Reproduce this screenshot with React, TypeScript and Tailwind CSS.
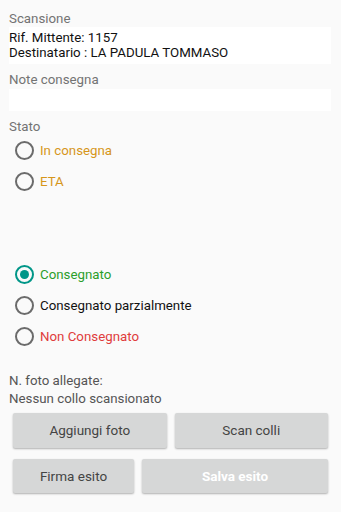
import React from "react";

function Radio({ label, color, checked }: { label: string; color: string; checked?: boolean }) {
  return (
    <div className="flex items-center h-[31px] pl-[15px]">
      {checked ? (
        <div className="w-[19px] h-[19px] rounded-full border-2 border-[#009688] flex items-center justify-center">
          <div className="w-[9px] h-[9px] rounded-full bg-[#009688]" />
        </div>
      ) : (
        <div className="w-[19px] h-[19px] rounded-full border-2 border-[#6b6b6b]" />
      )}
      <span className={`ml-[6px] text-[13.3px] ${color}`}>{label}</span>
    </div>
  );
}

export default function App() {
  return (
    <div className="w-[341px] h-[512px] bg-[#fafafa] overflow-hidden" style={{ fontFamily: "Roboto, 'Liberation Sans', sans-serif" }}>
      <div className="flex flex-col px-[9px] pt-[10px]">
        <div className="text-[13.3px] leading-[17px] text-[#737373]">Scansione</div>
        <div className="bg-white w-[322px] h-[37px] pt-[3px] text-[13.3px] leading-[15px] text-[#111]">
          <div>Rif. Mittente: 1157</div>
          <div>Destinatario : LA PADULA TOMMASO</div>
        </div>
        <div className="mt-[7px] text-[13.3px] leading-[17px] text-[#737373]">Note consegna</div>
        <div className="bg-white w-[322px] h-[22px] mt-[1px]" />
        <div className="mt-[7px] text-[13.3px] leading-[17px] text-[#737373]">Stato</div>
      </div>
      <div className="flex flex-col">
        <Radio label="In consegna" color="text-[#d6961a]" />
        <Radio label="ETA" color="text-[#d6961a]" />
        <div className="h-[62px]" />
        <Radio label="Consegnato" color="text-[#2b9e2b]" checked />
        <Radio label="Consegnato parzialmente" color="text-[#111]" />
        <Radio label="Non Consegnato" color="text-[#e03c3c]" />
      </div>
      <div className="px-[9px] mt-[20px] text-[13.3px] leading-[18px] text-[#555]">
        <div>N. foto allegate:</div>
        <div>Nessun collo scansionato</div>
      </div>
      <div className="flex flex-col gap-[11px] px-[13px] mt-[5px]">
        <div className="flex gap-[8px]">
          <button className="flex-1 h-[35px] bg-[#d6d7d7] rounded-[2px] shadow-[0_1px_2px_rgba(0,0,0,0.3)] text-[13.5px] text-[#444]">Aggiungi foto</button>
          <button className="flex-1 h-[35px] bg-[#d6d7d7] rounded-[2px] shadow-[0_1px_2px_rgba(0,0,0,0.3)] text-[13.5px] text-[#444]">Scan colli</button>
        </div>
        <div className="flex gap-[8px]">
          <button className="w-[121px] h-[34px] bg-[#d6d7d7] rounded-[2px] shadow-[0_1px_2px_rgba(0,0,0,0.3)] text-[13.5px] text-[#444]">Firma esito</button>
          <button className="flex-1 h-[34px] bg-[#d6d7d7] rounded-[2px] shadow-[0_1px_2px_rgba(0,0,0,0.3)] text-[13.5px] font-bold text-white">Salva esito</button>
        </div>
      </div>
    </div>
  );
}
